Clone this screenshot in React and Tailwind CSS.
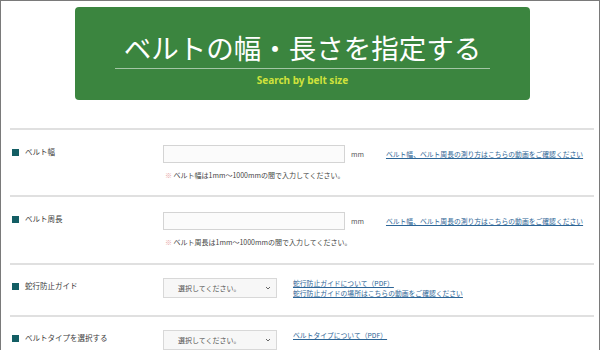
export default function App() {
  const font = { fontFamily: '"Noto Sans CJK JP", "Noto Sans", sans-serif' };

  const rows = [
    {
      label: "ベルト幅",
      kind: "input",
      note: "ベルト幅は1mm〜1000mmの間で入力してください。",
      links: ["ベルト幅、ベルト周長の測り方はこちらの動画をご確認ください"],
      h: "h-[67px]",
    },
    {
      label: "ベルト周長",
      kind: "input",
      note: "ベルト周長は1mm〜1000mmの間で入力してください。",
      links: ["ベルト幅、ベルト周長の測り方はこちらの動画をご確認ください"],
      h: "h-[68px]",
    },
    {
      label: "蛇行防止ガイド",
      kind: "select",
      links: ["蛇行防止ガイドについて（PDF）", "蛇行防止ガイドの場所はこちらの動画をご確認ください"],
      h: "h-[52px]",
    },
    {
      label: "ベルトタイプを選択する",
      kind: "select",
      links: ["ベルトタイプについて（PDF）"],
      h: "h-[40px]",
    },
  ];

  return (
    <div
      className="w-[600px] h-[350px] overflow-hidden bg-white border-l border-t border-r border-[#7a7a7a] text-[#444]"
      style={font}
    >
      <div className="pt-[6px] pl-[74px]">
        <div className="w-[455px] h-[93px] rounded-[4px] bg-[#3b853f] flex flex-col items-center pt-[26px]">
          <h1 className="text-[27.5px] leading-[28px] text-white font-normal">
            ベルトの幅・長さを指定する
          </h1>
          <div className="mt-[7px] w-[375px] h-px bg-[#a3c6a5]"></div>
          <p
            className="mt-[5px] text-[10px] leading-[12px] font-bold text-[#cfe23c]"
            style={{ fontFamily: '"Noto Sans", sans-serif' }}
          >
            Search by belt size
          </p>
        </div>
      </div>

      <div className="mt-[28px] ml-[9px] mr-[5px]">
        {rows.map((r, i) => (
          <div
            key={i}
            className={`border-t-2 border-[#e0e0e0] flex items-start pl-[2px] ${r.h} ${
              r.kind === "input" ? "pt-[15px]" : "pt-[13px]"
            }`}
          >
            <div
              className={`w-[151px] shrink-0 flex items-center gap-[6px] ${
                r.kind === "input" ? "mt-[2px]" : "mt-[3px]"
              }`}
            >
              <span className="w-[7px] h-[7px] bg-[#135e64]"></span>
              <span className="text-[7.5px] leading-[10px] text-[#3a3a3a]">{r.label}</span>
            </div>

            {r.kind === "input" ? (
              <div className="flex flex-col">
                <div className="flex items-center">
                  <div className="w-[182px] h-[18px] border border-[#d4d4d4] bg-[#fbfbfb]"></div>
                  <span className="ml-[6px] text-[7px] text-[#555]">mm</span>
                  <a className="ml-[22px] text-[6.8px] leading-[10px] text-[#2d6596] underline">
                    {r.links[0]}
                  </a>
                </div>
                <p className="mt-[7px] ml-[2px] text-[7px] leading-[10px] text-[#444]">
                  <span className="text-[#e7a3a3]">※</span> {r.note}
                </p>
              </div>
            ) : (
              <div className="flex items-start">
                <div className="w-[114px] h-[20px] border border-[#d8d8d8] bg-[#f7f7f7] flex items-center justify-between pl-[14px] pr-[5px]">
                  <span className="text-[7px] text-[#555]">選択してください。</span>
                  <svg width="6" height="4" viewBox="0 0 6 4">
                    <path d="M1 1 L3 3 L5 1" fill="none" stroke="#666" strokeWidth="1" />
                  </svg>
                </div>
                <div className="ml-[16px] flex flex-col">
                  {r.links.map((l, j) => (
                    <a key={j} className="text-[6.8px] leading-[10px] text-[#2d6596] underline">
                      {l}
                    </a>
                  ))}
                </div>
              </div>
            )}
          </div>
        ))}
      </div>
    </div>
  );
}
